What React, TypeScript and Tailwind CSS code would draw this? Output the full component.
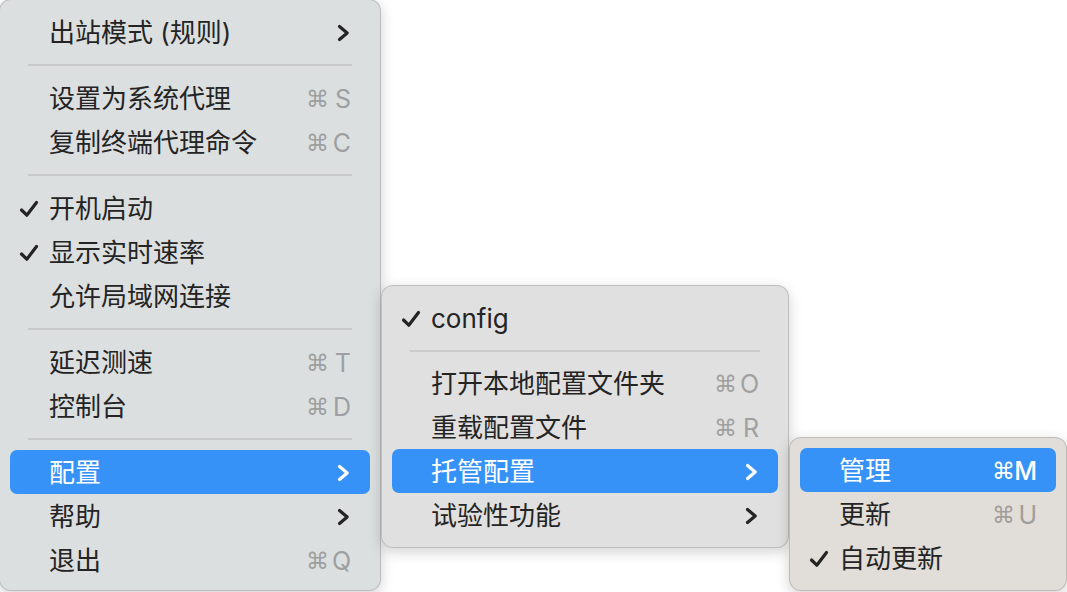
import React from "react";

type Entry =
  | { sep: true }
  | {
      sep?: false;
      label: string;
      checked?: boolean;
      key?: string;
      submenu?: boolean;
      active?: boolean;
    };

const FONT = "font-['Inter','Noto_Sans_CJK_SC','DejaVu_Sans',sans-serif]";

function Check() {
  return (
    <svg width="20" height="18" viewBox="0 0 20 18" className="absolute left-[9px] top-1/2 -translate-y-[8px]">
      <path d="M2.5 10 L7.8 15.2 L17.5 2.5" fill="none" stroke="currentColor" strokeWidth="3.2" strokeLinecap="round" strokeLinejoin="round" />
    </svg>
  );
}

function Chevron() {
  return (
    <svg width="13" height="18" viewBox="0 0 13 18" className="mr-[1px]">
      <path d="M2.5 2.5 L10.2 9 L2.5 15.5" fill="none" stroke="currentColor" strokeWidth="3.2" strokeLinecap="round" strokeLinejoin="round" />
    </svg>
  );
}

function Menu({
  items,
  className,
  sepColor,
  keyColor,
}: {
  items: Entry[];
  className: string;
  sepColor: string;
  keyColor: string;
}) {
  return (
    <div
      className={`absolute flex flex-col rounded-[12px] border border-black/15 shadow-[0_4px_14px_rgba(0,0,0,0.18)] ${FONT} ${className}`}
    >
      {items.map((it, i) => {
        if (it.sep) {
          return (
            <div key={i} className="h-[22px] flex items-center px-[28px]">
              <div className={`h-[2px] w-full ${sepColor}`} />
            </div>
          );
        }
        const active = it.active;
        return (
          <div
            key={i}
            className={`relative mx-[10px] h-[44px] shrink-0 flex items-center pt-[2px] pl-[39px] pr-[19px] rounded-[7px] text-[26px] leading-none ${
              active ? "bg-[#3792f8] text-white" : "text-[#242424]"
            }`}
          >
            {it.checked && <Check />}
            <span className="flex-1 whitespace-nowrap">{it.label}</span>
            {it.key && (
              <span className={`flex items-center text-[25px] ${active ? "text-white font-medium" : keyColor}`}>
                <span className="w-[17px] text-left text-[23px] whitespace-nowrap font-['DejaVu_Sans',sans-serif]">⌘</span>
                <span className="w-[28px] text-right">{it.key}</span>
              </span>
            )}
            {it.submenu && <Chevron />}
          </div>
        );
      })}
    </div>
  );
}

export default function App() {
  const main: Entry[] = [
    { label: "出站模式 (规则)", submenu: true },
    { sep: true },
    { label: "设置为系统代理", key: "S" },
    { label: "复制终端代理命令", key: "C" },
    { sep: true },
    { label: "开机启动", checked: true },
    { label: "显示实时速率", checked: true },
    { label: "允许局域网连接" },
    { sep: true },
    { label: "延迟测速", key: "T" },
    { label: "控制台", key: "D" },
    { sep: true },
    { label: "配置", submenu: true, active: true },
    { label: "帮助", submenu: true },
    { label: "退出", key: "Q" },
  ];
  const config: Entry[] = [
    { label: "config", checked: true },
    { sep: true },
    { label: "打开本地配置文件夹", key: "O" },
    { label: "重载配置文件", key: "R" },
    { label: "托管配置", submenu: true, active: true },
    { label: "试验性功能", submenu: true },
  ];
  const managed: Entry[] = [
    { label: "管理", key: "M", active: true },
    { label: "更新", key: "U" },
    { label: "自动更新", checked: true },
  ];
  return (
    <div className="relative w-[1067px] h-[592px] overflow-hidden bg-white">
      <Menu
        items={main}
        className="left-[-1px] top-[-1px] w-[382px] h-[592px] pt-[10px] pb-[8px] bg-[#dcdfe0]"
        sepColor="bg-[#c6c8ca]"
        keyColor="text-[#9d9fa0]"
      />
      <Menu
        items={config}
        className="left-[381px] top-[285px] w-[408px] h-[263px] pt-[10px] pb-[10px] bg-[#e0e0e0]"
        sepColor="bg-[#cbcbcb]"
        keyColor="text-[#a0a0a0]"
      />
      <Menu
        items={managed}
        className="left-[789px] top-[437px] w-[278px] h-[154px] pt-[10px] pb-[10px] bg-[#e1ddd9]"
        sepColor="bg-[#cbc7c3]"
        keyColor="text-[#a29e9a]"
      />
    </div>
  );
}
